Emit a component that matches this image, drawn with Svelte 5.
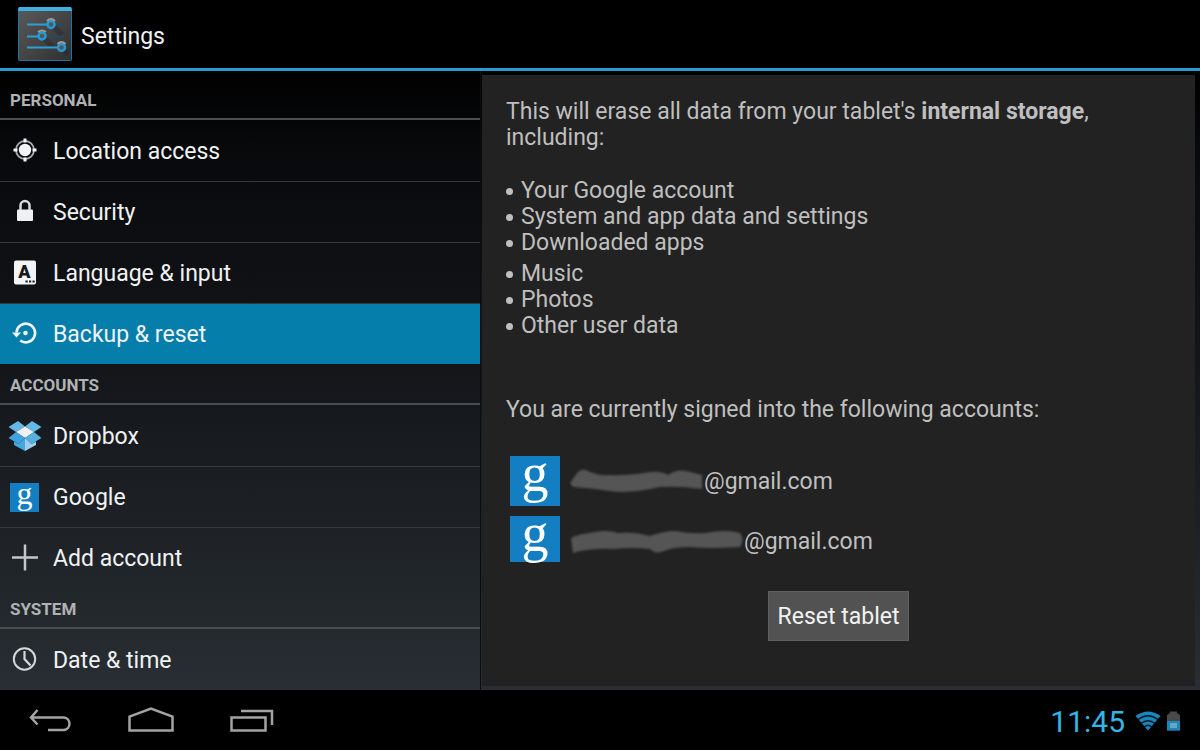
<script lang="ts">
  type Item = { id: string; label: string };

  const sections: { title: string; items: Item[] }[] = [
    {
      title: 'PERSONAL',
      items: [
        { id: 'location', label: 'Location access' },
        { id: 'security', label: 'Security' },
        { id: 'language', label: 'Language & input' },
        { id: 'backup', label: 'Backup & reset' },
      ],
    },
    {
      title: 'ACCOUNTS',
      items: [
        { id: 'dropbox', label: 'Dropbox' },
        { id: 'google', label: 'Google' },
        { id: 'add', label: 'Add account' },
      ],
    },
    {
      title: 'SYSTEM',
      items: [{ id: 'date', label: 'Date & time' }],
    },
  ];

  const deviceData = ['Your Google account', 'System and app data and settings', 'Downloaded apps'];
  const userData = ['Music', 'Photos', 'Other user data'];

  // the user part of each address is scribbled over
  const accounts = [
    {
      width: 134,
      path: 'M0 20 Q4 14 8 9 Q12 5 18 8 Q28 13 40 12 Q60 13 80 9 Q92 8 98 12 Q106 6 116 8 L132 12 L132 26 Q110 23 90 24 Q60 31 40 28 Q20 25 3 24 Z',
    },
    {
      width: 174,
      path: 'M1 15 Q8 11 20 10 Q36 6 48 10 Q64 8 80 13 Q94 8 106 8 Q120 11 136 10 Q156 6 170 10 Q175 16 170 24 Q140 26 120 24 Q104 24 94 28 Q86 32 80 26 Q60 24 44 26 Q20 25 3 30 Z',
    },
  ];

  let selected = $state('backup');
</script>

<div class="screen">
  <header>
    <svg class="logo" viewBox="0 0 54 54" aria-hidden="true">
      <defs>
        <linearGradient id="tile" x1="0" y1="0" x2="1" y2="1">
          <stop offset="0" stop-color="#5a5a5a" />
          <stop offset="1" stop-color="#303030" />
        </linearGradient>
      </defs>
      <rect x="0.5" y="0.5" width="53" height="53" rx="1" fill="url(#tile)" stroke="#1a77a5" />
      <path d="M1 0h52l1 4H0z" fill="#3fb0e0" />
      <path d="M36 20l8 8M27 32l8 8M46 43l4 4" stroke="#262626" stroke-width="6" opacity="0.4" />
      <path d="M37 17.500h9M28 29.500h18" stroke="#1d4d68" stroke-width="1.500" />
      <path d="M9 17.500h20M9 29.500h11M9 40.500h30" stroke="#2d9fd6" stroke-width="2" />
      <g fill="#555" stroke="#229bd8" stroke-width="2.500">
        <circle cx="33" cy="17.500" r="3.500" />
        <circle cx="24" cy="29" r="3.500" />
        <circle cx="43.500" cy="40.500" r="3.500" />
      </g>
      <path d="M29 14q4-4 8 0M20 25q4-3 8 0M39.500 37q4-4 8 0" fill="none" stroke="#999" stroke-width="2" />
    </svg>
    <h1>Settings</h1>
  </header>

  <div class="content">
    <nav class="sidebar" aria-label="Settings">
      {#each sections as section}
        <h2>{section.title}</h2>
        <ul>
          {#each section.items as item}
            <li>
              <button class="row" class:selected={selected === item.id} onclick={() => (selected = item.id)}>
                {#if item.id === 'google'}
                  <span class="g-logo small" aria-hidden="true"><span>g</span></span>
                {:else}
                  <svg class="icon" viewBox="0 0 34 34" aria-hidden="true">
                    {#if item.id === 'location'}
                      <circle cx="17" cy="16" r="9" fill="none" stroke="#a9adaf" stroke-width="1.800" />
                      <circle cx="17" cy="16" r="6.200" fill="#f2f4f5" />
                      <path d="M17 4.500v4M17 23.500v4M5.500 16h4M24.500 16h4" stroke="#f2f4f5" stroke-width="3" />
                    {:else if item.id === 'security'}
                      <rect x="9" y="14.500" width="16" height="11.500" rx="1" fill="#eef0f2" />
                      <path d="M12.500 15v-4.500a4.500 4.500 0 0 1 9 0V15" fill="none" stroke="#d8dbdd" stroke-width="2.500" />
                    {:else if item.id === 'language'}
                      <rect x="6" y="4.500" width="22" height="24" rx="2" fill="#f2f4f5" />
                      <text class="letter" x="16.500" y="22" text-anchor="middle">A</text>
                      <path d="M17.500 25.500h2.200M21 25.500h2.200M24.500 25.500h2.200" stroke="#17191b" stroke-width="2" />
                    {:else if item.id === 'backup'}
                      <path d="M8.500 15.500a9.300 9.300 0 1 1 3.800 8" fill="none" stroke="#f2f4f5" stroke-width="2.600" />
                      <path d="M4 15.500h9l-4.500 5z" fill="#f2f4f5" />
                      <circle cx="17.500" cy="16" r="2.300" fill="#f2f4f5" />
                    {:else if item.id === 'dropbox'}
                      <path d="M10 2L17 7.500L8 13L0.500 8z" fill="#64b9e6" />
                      <path d="M24 2L17 7.500L26 13L33.500 8z" fill="#64b9e6" />
                      <path d="M17 7.500L26 13L17 19L8 13z" fill="#edf1f5" />
                      <path d="M8 13L17 19L10.500 25L0.500 19z" fill="#3fa4dd" />
                      <path d="M26 13L17 19L23.500 25L33.500 19z" fill="#55b0e2" />
                      <path d="M6 22.500l4.500 2.500L17 19V32L6 26z" fill="#45a8de" />
                      <path d="M28 22.500l-4.500 2.500L17 19V32L28 26z" fill="#9ccfeb" />
                    {:else if item.id === 'add'}
                      <path d="M4 16.500h26M17 3.500v26" stroke="#c4c6c8" stroke-width="2.500" />
                    {:else}
                      <circle cx="16.500" cy="16" r="10.700" fill="none" stroke="#d5d8da" stroke-width="2" />
                      <path d="M16.500 8v8l6 6.500" fill="none" stroke="#d5d8da" stroke-width="2.200" />
                    {/if}
                  </svg>
                {/if}
                {item.label}
              </button>
            </li>
          {/each}
        </ul>
      {/each}
    </nav>

    <main>
      <p>This will erase all data from your tablet's <strong>internal storage</strong>, including:</p>
      <ul class="bullets">
        {#each deviceData as entry}
          <li>{entry}</li>
        {/each}
      </ul>
      <ul class="bullets">
        {#each userData as entry}
          <li>{entry}</li>
        {/each}
      </ul>

      <p class="signed-in">You are currently signed into the following accounts:</p>
      <ul class="accounts">
        {#each accounts as account}
          <li>
            <span class="g-logo" aria-hidden="true"><span>g</span></span>
            <svg class="scribble" width={account.width} height="36" aria-hidden="true">
              <path d={account.path} />
            </svg>
            <span class="address">@gmail.com</span>
          </li>
        {/each}
      </ul>

      <button class="reset">Reset tablet</button>
    </main>
  </div>

  <footer>
    <div class="keys">
      <button aria-label="Back">
        <svg viewBox="0 0 46 30">
          <path d="M10.500 5L4 12.500L10.500 19.500M4 12.500h33a6.300 6.300 0 0 1 0 12.500h-16" />
        </svg>
      </button>
      <button aria-label="Home">
        <svg viewBox="0 0 46 30">
          <path d="M1.500 25.500V11.500L23 3.500L44.500 11.500V25.500z" />
        </svg>
      </button>
      <button aria-label="Recent apps">
        <svg viewBox="0 0 46 30">
          <path d="M2.500 12.500h34v13h-34zM12 6h31v14" />
        </svg>
      </button>
    </div>
    <div class="status">
      <time>11:45</time>
      <svg width="26" height="20" viewBox="0 0 26 20" aria-label="Wi-Fi" role="img">
        <path d="M0.500 5Q13-4 25.500 5L13 19.500z" fill="#1787bd" />
        <path d="M3 8.500q10-7.500 20 0M6 12.500q7-5.500 14 0M9 16q4-3.500 8 0" fill="none" stroke="#04141d" stroke-width="1.300" />
      </svg>
      <svg width="13" height="20" viewBox="0 0 13 20" aria-label="Battery" role="img">
        <path d="M0 19.500V4L3 2V0.500h7V2l3 2v15.500z" fill="#4a4a4a" />
        <path d="M0 10h13v9.500H0z" fill="#1787bd" />
        <path d="M3 12h7v5H3z" fill="#6aa5bf" />
      </svg>
    </div>
  </footer>
</div>

<style>
  :global(body) {
    margin: 0;
    background: #000;
  }

  .screen {
    display: flex;
    flex-direction: column;
    min-height: 100vh;
    font-family: Roboto, 'Noto Sans', sans-serif;
    font-size: 23px;
    color: #f0f2f4;
    background: linear-gradient(#000 0, #000 68px, #08090b 20%, #16191d 55%, #282e33 92%);
  }

  h1,
  h2,
  p,
  ul {
    margin: 0;
    padding: 0;
    font-weight: 400;
  }

  ul {
    list-style: none;
  }

  button {
    padding: 0;
    border: none;
    font: inherit;
    color: inherit;
    background: none;
    cursor: pointer;
  }

  header {
    display: flex;
    align-items: center;
    gap: 9px;
    height: 68px;
    padding-left: 18px;
    border-bottom: 3px solid #2b9bcf;
  }

  .logo {
    width: 54px;
    height: 54px;
  }

  h1 {
    font-size: 23px;
    padding-top: 4px;
  }

  .content {
    display: flex;
    flex: 1;
  }

  .sidebar {
    width: 40%;
    padding-top: 8px;
    border-right: 1px solid #0b0c0e;
    box-sizing: content-box;
  }

  h2 {
    height: 39px;
    padding-left: 10px;
    border-bottom: 2px solid #4a4c4e;
    font-size: 17px;
    font-weight: 700;
    line-height: 42px;
    color: #b0b2b4;
  }

  .sidebar li {
    border-top: 1px solid #33393d;
  }

  .sidebar li:first-child {
    border-top-color: transparent;
  }

  .row {
    display: flex;
    align-items: center;
    gap: 11px;
    width: 100%;
    height: 60px;
    padding: 0 8px;
    text-align: left;
  }

  .row.selected {
    background: #057eac;
  }

  .icon {
    width: 34px;
    height: 34px;
  }

  .letter {
    font-size: 18px;
    font-weight: 900;
    fill: #17191b;
  }

  .g-logo {
    display: flex;
    justify-content: center;
    width: 50px;
    height: 50px;
    font-family: 'Liberation Serif', serif;
    font-size: 54px;
    line-height: 34px;
    color: #fff;
    background: #137fc2;
  }

  .g-logo.small {
    width: 29px;
    height: 29px;
    margin: 0 3px 0 2px;
    font-size: 32px;
    line-height: 20px;
  }

  main {
    flex: 1;
    display: flex;
    flex-direction: column;
    margin: 4px 5px 4px 1px;
    padding: 24px;
    line-height: 26px;
    color: #bfbfbf;
    background: #222;
  }

  strong {
    font-weight: 700;
  }

  .bullets {
    margin-top: 27px;
  }

  .bullets + .bullets {
    margin-top: 5px;
  }

  .bullets li {
    display: flex;
    align-items: center;
    gap: 8px;
  }

  .bullets li::before {
    content: '';
    width: 7px;
    height: 7px;
    border-radius: 50%;
    background: #bfbfbf;
  }

  .signed-in {
    margin-top: 58px;
  }

  .accounts {
    display: flex;
    flex-direction: column;
    gap: 10px;
    margin: 33px 0 0 4px;
  }

  .accounts li {
    display: flex;
    align-items: center;
    height: 50px;
  }

  .accounts li:last-child .g-logo {
    align-self: flex-start;
    height: 46px;
  }

  .scribble {
    margin-left: 10px;
    fill: #555;
    filter: blur(1px);
  }

  .address {
    padding-top: 2px;
  }

  .reset {
    align-self: center;
    height: 50px;
    margin-top: 25px;
    padding: 2px 9px 0;
    border: 1px solid #5f5f5f;
    color: #f2f2f2;
    background: #525252;
  }

  footer {
    display: flex;
    align-items: center;
    justify-content: space-between;
    height: 60px;
    padding: 0 20px 0 27px;
    background: #000;
  }

  .keys {
    display: flex;
    gap: 55px;
  }

  .keys svg {
    display: block;
    width: 46px;
    height: 30px;
    fill: none;
    stroke: #a3a3a3;
    stroke-width: 2.500;
  }

  .status {
    display: flex;
    align-items: center;
    gap: 6px;
    padding-top: 2px;
  }

  time {
    margin-right: 4px;
    font-size: 30px;
    color: #33b5e5;
  }
</style>
